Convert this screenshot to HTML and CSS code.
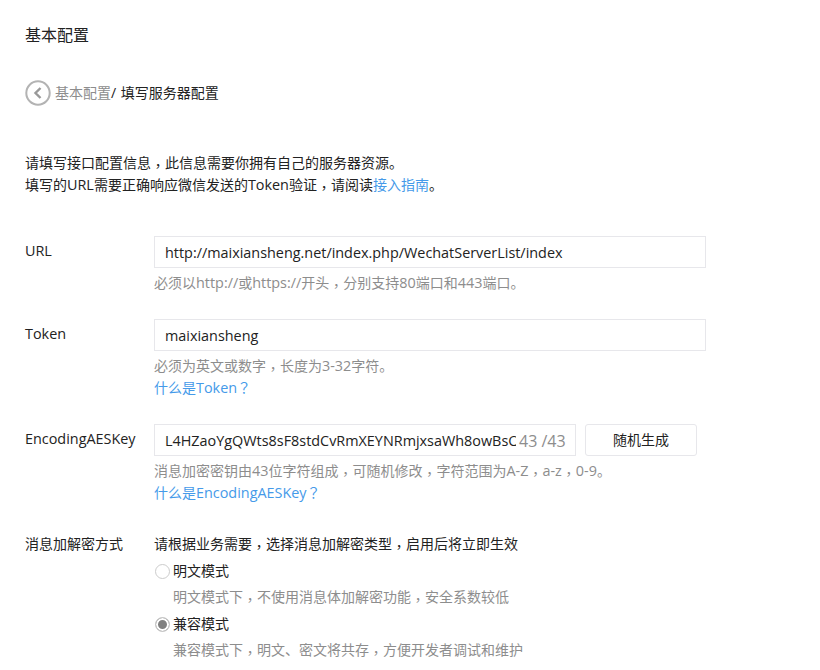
FILE: index.html
```html
<!DOCTYPE html>
<html lang="zh-CN">
<head>
<meta charset="utf-8">
<title>基本配置</title>
<link rel="stylesheet" href="styles.css">
</head>
<body>
<main class="page">
  <h1 class="title">基本配置</h1>
  <nav class="crumb">
    <svg class="back" width="26" height="26" viewBox="0 0 26 26" aria-hidden="true"><circle cx="13" cy="13" r="11.7" fill="none" stroke="#b3b3b3" stroke-width="2"/><path d="M15.5 8 L10.5 13 L15.5 18" fill="none" stroke="#999" stroke-width="2.4"/></svg>
    <span class="crumb-link">基本配置</span><span class="crumb-current">/ 填写服务器配置</span>
  </nav>
  <p class="intro">请填写接口配置信息<span class="cm">，</span>此信息需要你拥有自己的服务器资源。<br>填写的<span class="en">URL</span>需要正确响应微信发送的<span class="en">Token</span>验证<span class="cm">，</span>请阅读<a class="link">接入指南</a>。</p>
  <div class="form">
    <div class="row">
      <label class="label en">URL</label>
      <div class="field">
        <div class="input input-wide en">http://maixiansheng.net/index.php/WechatServerList/index</div>
        <p class="hint">必须以<span class="en">http://</span>或<span class="en">https://</span>开头<span class="cm">，</span>分别支持<span class="en">80</span>端口和<span class="en">443</span>端口。</p>
      </div>
    </div>
    <div class="row row-next">
      <label class="label en">Token</label>
      <div class="field">
        <div class="input input-wide en">maixiansheng</div>
        <p class="hint">必须为英文或数字<span class="cm">，</span>长度为<span class="en">3-32</span>字符。</p>
        <a class="link help">什么是<span class="en">Token</span><span class="qm">？</span></a>
      </div>
    </div>
    <div class="row row-next">
      <label class="label en">EncodingAESKey</label>
      <div class="field">
        <div class="key-line">
          <div class="input input-key en"><span class="key-text">L4HZaoYgQWts8sF8stdCvRmXEYNRmjxsaWh8owBsOGk</span><span class="count">43 /43</span></div>
          <button class="btn" type="button">随机生成</button>
        </div>
        <p class="hint">消息加密密钥由<span class="en">43</span>位字符组成<span class="cm">，</span>可随机修改<span class="cm">，</span>字符范围为<span class="en">A-Z</span><span class="cm">，</span><span class="en">a-z</span><span class="cm">，</span><span class="en">0-9</span>。</p>
        <a class="link help">什么是<span class="en">EncodingAESKey</span><span class="qm">？</span></a>
      </div>
    </div>
    <div class="row row-mode">
      <label class="label label-mode">消息加解密方式</label>
      <div class="field">
        <p class="mode-lead">请根据业务需要<span class="cm">，</span>选择消息加解密类型<span class="cm">，</span>启用后将立即生效</p>
        <div class="radio-line"><span class="radio"></span>明文模式</div>
        <p class="hint mode-hint">明文模式下<span class="cm">，</span>不使用消息体加解密功能<span class="cm">，</span>安全系数较低</p>
        <div class="radio-line"><span class="radio radio-on"></span>兼容模式</div>
        <p class="hint mode-hint">兼容模式下<span class="cm">，</span>明文、密文将共存<span class="cm">，</span>方便开发者调试和维护</p>
      </div>
    </div>
  </div>
</main>
</body>
</html>
```
FILE: styles.css
```css
* { box-sizing: border-box; }
html, body { margin: 0; height: 670px; overflow: hidden; background: #fff; }
body {
  font-family: "Open Sans", "Noto Sans CJK SC", sans-serif;
  font-size: 14px;
  line-height: 22px;
  color: #222;
}
.en { font-size: 14.4px; }
.cm { font-family: "Noto Sans CJK TC", sans-serif; font-feature-settings: "locl" 0; line-height: 0; vertical-align: -3px; }
.qm { font-family: "Noto Sans CJK TC", sans-serif; font-feature-settings: "locl" 0; line-height: 0; }
.page { padding: 24px 25px 0; }
.title { margin: 0; font-size: 16px; font-weight: 400; line-height: 22px; color: #222; }
.crumb { display: flex; align-items: center; margin-top: 34px; height: 26px; }
.back { margin-right: 4px; flex: none; }
.crumb-link { color: #8d8d8d; }
.crumb-current { color: #222; word-spacing: 1px; }
.intro { margin: 46px 0 0; }
.link { color: #459ae9; }
.form { margin-top: 41px; }
.row { display: flex; }
.row-next { margin-top: 26px; }
.row-mode { margin-top: 29px; }
.label { width: 129px; flex: none; line-height: 28px; }
.label-mode { line-height: 22px; }
.field { flex: 1; min-width: 0; margin-top: -1px; }
.row-mode .field { margin-top: 0; }
.input {
  height: 32px;
  border: 1px solid #e7e7eb;
  padding: 0 10px;
  line-height: 32px;
  color: #222;
}
.input-wide { width: 552px; }
.key-line { display: flex; gap: 9px; }
.input-key { width: 422px; display: flex; padding-right: 0; }
.key-text { width: 351px; overflow: hidden; white-space: nowrap; flex: none; }
.count { color: #8d8d8d; margin-left: 3px; font-size: 16px; white-space: nowrap; }
.btn {
  width: 112px;
  height: 32px;
  border: 1px solid #e7e7eb;
  border-radius: 3px;
  background: #fff;
  font: inherit;
  color: #222;
  padding: 0;
}
.hint { margin: 4px 0 0; color: #8d8d8d; }
.help { display: block; }
.mode-lead { margin: 0; }
.radio-line { display: flex; align-items: center; margin-top: 5px; }
.radio {
  width: 15px;
  height: 15px;
  border: 1px solid #ccc;
  border-radius: 50%;
  margin-left: 1px;
  margin-right: 3px;
  background: #fff;
  flex: none;
}
.radio-on { background: #808080; box-shadow: inset 0 0 0 2px #fff; }
.mode-hint { margin: 4px 0 0 19px; }
```
